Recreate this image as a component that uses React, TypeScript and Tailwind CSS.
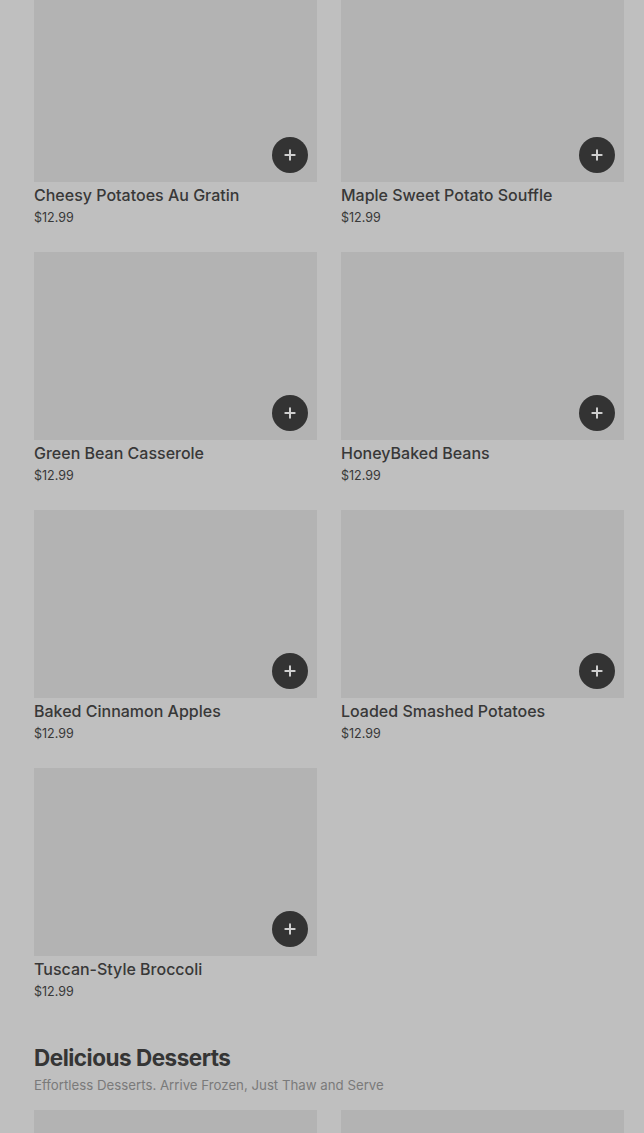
import { Plus } from 'lucide-react';

type Item = { name: string; price: string };

const sides: Item[] = [
  { name: 'Cheesy Potatoes Au Gratin', price: '$12.99' },
  { name: 'Maple Sweet Potato Souffle', price: '$12.99' },
  { name: 'Green Bean Casserole', price: '$12.99' },
  { name: 'HoneyBaked Beans', price: '$12.99' },
  { name: 'Baked Cinnamon Apples', price: '$12.99' },
  { name: 'Loaded Smashed Potatoes', price: '$12.99' },
  { name: 'Tuscan-Style Broccoli', price: '$12.99' },
];

function ProductCard({ item }: { item?: Item }) {
  return (
    <div className="flex flex-col">
      <div className="relative h-[188px] bg-[#b3b3b3]">
        {item ? (
          <button
            type="button"
            aria-label={`Add ${item.name}`}
            className="absolute right-[9px] bottom-[9px] flex h-9 w-9 items-center justify-center rounded-full bg-[#333333] text-[#cfcfcf]"
          >
            <Plus size={16} strokeWidth={3} />
          </button>
        ) : null}
      </div>
      {item ? (
        <>
          <div className="mt-px text-[16px] leading-6 font-medium text-[#383838]">{item.name}</div>
          <div className="mt-px text-[12.5px] leading-5 text-[#383838]">{item.price}</div>
        </>
      ) : null}
    </div>
  );
}

export default function App() {
  return (
    <div className="min-h-[1133px] overflow-hidden bg-[#bfbfbf] pl-[34px] pr-[20px] font-['Inter',sans-serif]">
      <div className="-mt-[6px] grid grid-cols-2 gap-x-6 gap-y-6">
        {sides.map((item) => (
          <ProductCard key={item.name} item={item} />
        ))}
      </div>

      <section className="pt-[40px]">
        <h2 className="text-[22.5px] leading-8 font-bold tracking-[-0.5px] text-[#353535]">Delicious Desserts</h2>
        <p className="mt-px text-[13.25px] leading-5 text-[#7a7a7a]">Effortless Desserts. Arrive Frozen, Just Thaw and Serve</p>
        <div className="mt-[15px] grid grid-cols-2 gap-x-6">
          <ProductCard />
          <ProductCard />
        </div>
      </section>
    </div>
  );
}
